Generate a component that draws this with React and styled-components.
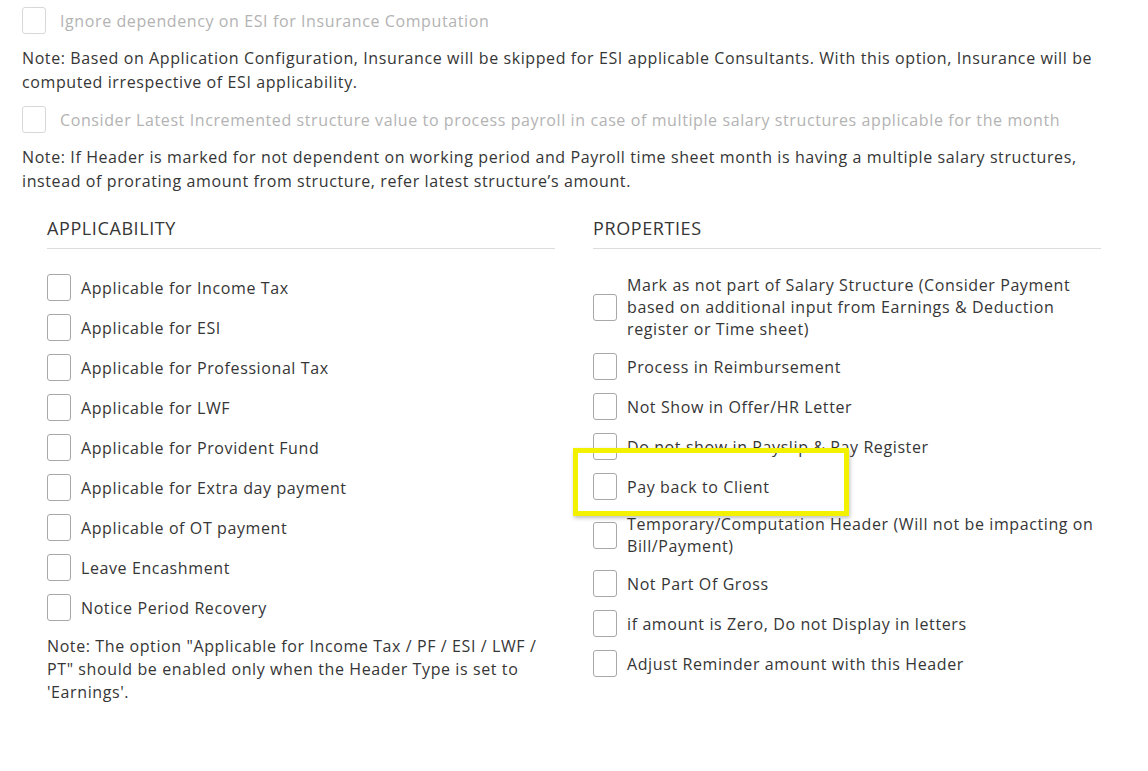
import React from "react";
import styled, { createGlobalStyle } from "styled-components";

const GlobalStyle = createGlobalStyle`
  html, body {
    margin: 0;
    padding: 0;
    background: #fff;
  }
  body {
    font-family: "Open Sans", "Liberation Sans", sans-serif;
    color: #363636;
    letter-spacing: 0.6px;
  }
`;

const applicability = [
  "Applicable for Income Tax",
  "Applicable for ESI",
  "Applicable for Professional Tax",
  "Applicable for LWF",
  "Applicable for Provident Fund",
  "Applicable for Extra day payment",
  "Applicable of OT payment",
  "Leave Encashment",
  "Notice Period Recovery",
];

const properties = [
  "Mark as not part of Salary Structure (Consider Payment based on additional input from Earnings & Deduction register or Time sheet)",
  "Process in Reimbursement",
  "Not Show in Offer/HR Letter",
  "Do not show in Payslip & Pay Register",
  "Pay back to Client",
  "Temporary/Computation Header (Will not be impacting on Bill/Payment)",
  "Not Part Of Gross",
  "if amount is Zero, Do not Display in letters",
  "Adjust Reminder amount with this Header",
];

const Checkbox = ({ label, disabled }) => (
  <CheckRow $disabled={disabled}>
    <Box $disabled={disabled} />
    <span>{label}</span>
  </CheckRow>
);

const App = () => {
  return (
    <Page>
      <GlobalStyle />
      <TopOption>
        <Box $disabled />
        <span>Ignore dependency on ESI for Insurance Computation</span>
      </TopOption>
      <Note>
        Note: Based on Application Configuration, Insurance will be skipped for
        ESI applicable Consultants. With this option, Insurance will be
        computed irrespective of ESI applicability.
      </Note>
      <TopOption>
        <Box $disabled />
        <span>
          Consider Latest Incremented structure value to process payroll in
          case of multiple salary structures applicable for the month
        </span>
      </TopOption>
      <Note>
        Note: If Header is marked for not dependent on working period and
        Payroll time sheet month is having a multiple salary structures,
        instead of prorating amount from structure, refer latest structure’s
        amount.
      </Note>

      <Columns>
        <Section>
          <Heading>Applicability</Heading>
          <List>
            {applicability.map((item) => (
              <Checkbox key={item} label={item} />
            ))}
          </List>
          <SideNote>
            Note: The option "Applicable for Income Tax / PF / ESI / LWF / PT"
            should be enabled only when the Header Type is set to 'Earnings'.
          </SideNote>
        </Section>
        <Section>
          <Heading>Properties</Heading>
          <List>
            {properties.map((item) => (
              <Checkbox key={item} label={item} />
            ))}
          </List>
          <Highlight />
        </Section>
      </Columns>
    </Page>
  );
};

const Page = styled.div`
  padding: 7px 22px 40px;
  font-size: 16px;
`;

const Box = styled.span`
  flex: 0 0 auto;
  width: 24px;
  height: 27px;
  box-sizing: border-box;
  border: 1px solid ${(p) => (p.$disabled ? "#d8d8d8" : "#a8a8a8")};
  border-radius: 3px;
  background: #fff;
`;

const TopOption = styled.div`
  display: flex;
  align-items: center;
  gap: 14px;
  color: #b3b3b3;
  font-size: 16px;
  line-height: 22px;
  margin-bottom: 12px;
`;

const Note = styled.p`
  margin: 0 0 12px;
  font-size: 16px;
  line-height: 24px;
`;

const Columns = styled.div`
  display: grid;
  grid-template-columns: 1fr 1fr;
  column-gap: 38px;
  padding: 11px 25px 0;
`;

const Section = styled.div`
  position: relative;
`;

const Heading = styled.h3`
  margin: 0;
  padding-bottom: 8px;
  border-bottom: 1px solid #dcdcdc;
  font-size: 18px;
  font-weight: 400;
  line-height: 24px;
  text-transform: uppercase;
`;

const List = styled.div`
  display: flex;
  flex-direction: column;
  gap: 13px;
  padding-top: 25px;
`;

const CheckRow = styled.label`
  display: flex;
  align-items: center;
  gap: 10px;
  font-size: 16px;
  line-height: 22px;
  color: ${(p) => (p.$disabled ? "#b3b3b3" : "#363636")};
`;

const SideNote = styled.p`
  margin: 14px 0 0;
  font-size: 16px;
  line-height: 23px;
  max-width: 500px;
`;

const Highlight = styled.div`
  position: absolute;
  left: -20px;
  top: 232px;
  width: 266px;
  height: 58px;
  border: 5px solid #f2f200;
  box-shadow: 1px 2px 4px rgba(0, 0, 0, 0.25);
  pointer-events: none;
`;

export default App;
